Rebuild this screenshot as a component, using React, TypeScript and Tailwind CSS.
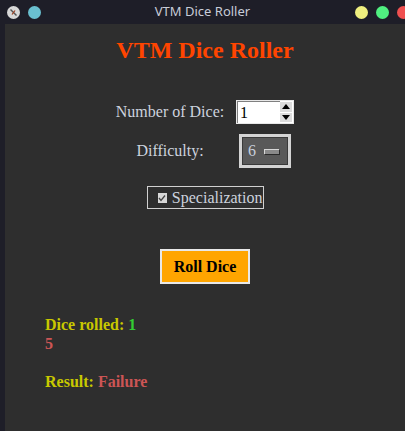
import React from 'react';

const serif = { fontFamily: '"Liberation Serif", "Times New Roman", serif' };

function Dot({ color }: { color: string }) {
  return <span className={`block h-[13px] w-[13px] rounded-full ${color}`} />;
}

export default function App() {
  return (
    <div className="flex h-[431px] w-[405px] flex-col overflow-hidden bg-[#1e1e28]">
      {/* title bar */}
      <div className="relative flex h-[24px] shrink-0 items-center">
        <div className="ml-[7px] flex items-center gap-[8px]">
          <span className="flex h-[13px] w-[13px] items-center justify-center rounded-full bg-[#d8d8d8]">
            <svg width="9" height="9" viewBox="0 0 9 9">
              <path d="M1.5 1.5 L7.5 7.5" stroke="#555" strokeWidth="1.4" />
              <path d="M6 2.5 L3 6.5" stroke="#a04020" strokeWidth="1.2" />
            </svg>
          </span>
          <Dot color="bg-[#6ac0d0]" />
        </div>
        <div
          className="absolute inset-x-0 top-0 flex h-[24px] items-center justify-center text-[13px] text-[#c8ccd8]"
          style={{ fontFamily: '"Noto Sans", "Open Sans", sans-serif' }}
        >
          VTM Dice Roller
        </div>
        <div className="ml-auto mr-[-5px] flex items-center gap-[8px]">
          <Dot color="bg-[#f0f080]" />
          <Dot color="bg-[#50f080]" />
          <Dot color="bg-[#f05050]" />
        </div>
      </div>

      {/* content */}
      <div className="ml-[5px] flex flex-1 flex-col bg-[#2e2e2e]" style={serif}>
        <h1 className="mt-[12px] text-center text-[24px] font-bold leading-[28px] text-[#ff4500]">VTM Dice Roller</h1>

        <div className="mx-auto mt-[36px] grid grid-cols-[108px_58px] items-center justify-items-center gap-x-[12px] gap-y-[10px] text-[16px] text-[#cdd3de]">
          <span className="whitespace-nowrap leading-[20px]">Number of Dice:</span>
          <div className="flex h-[24px] w-[58px] border border-[#e8e8e8] bg-white">
            <div className="flex flex-1 items-center border-l border-t border-[#808080] pl-[2px] text-[16px] leading-none text-black">1</div>
            <div className="flex w-[13px] flex-col gap-[1px] bg-white py-[1px] pr-[1px]">
              <div className="flex flex-1 items-center justify-center bg-[#dcdcdc]">
                <svg width="8" height="5" viewBox="0 0 8 5"><path d="M0 5 L4 0 L8 5 Z" fill="#000" /></svg>
              </div>
              <div className="flex flex-1 items-center justify-center bg-[#dcdcdc]">
                <svg width="8" height="5" viewBox="0 0 8 5"><path d="M0 0 L4 5 L8 0 Z" fill="#000" /></svg>
              </div>
            </div>
          </div>

          <span className="whitespace-nowrap leading-[20px]">Difficulty:</span>
          <div className="h-[34px] w-[52px] border-[3px] border-[#d4d4d4] bg-[#d4d4d4]">
            <div className="flex h-full w-full items-center border border-[#3a3a3a] bg-[#595959] pl-[5px]">
              <span className="leading-none text-[#c8d0dc]">6</span>
              <span className="ml-[8px] block h-[5px] w-[15px] border-l border-t border-[#d8d8d8] bg-[#8a8a8a] shadow-[1px_1px_0_#2a2a2a]" />
            </div>
          </div>
        </div>

        <div className="mt-[18px] flex justify-center">
          <div className="flex h-[23px] w-[117px] items-center border border-[#d0d0d0] pl-[10px] text-[16px] text-[#cdd3de]">
            <span className="flex h-[10px] w-[10px] items-center justify-center bg-[#d8d8d8]">
              <svg width="8" height="8" viewBox="0 0 8 8">
                <path d="M1 4 L3 6.5 L7 1.5" stroke="#444" strokeWidth="1.3" fill="none" />
              </svg>
            </span>
            <span className="ml-[5px] leading-none">Specialization</span>
          </div>
        </div>

        <div className="mt-[40px] flex justify-center">
          <div className="flex h-[35px] w-[90px] items-center justify-center border-2 border-[#e8e8e8] bg-[#ffa500] text-[16px] font-bold text-black">
            Roll Dice
          </div>
        </div>

        <div className="ml-[40px] mt-[31px] text-[16px] font-bold leading-[19px]">
          <div>
            <span className="text-[#c8c800]">Dice rolled: </span>
            <span className="text-[#33cc33]">1</span>
          </div>
          <div className="text-[#cc5555]">5</div>
          <div className="mt-[19px]">
            <span className="text-[#c8c800]">Result: </span>
            <span className="text-[#cc5555]">Failure</span>
          </div>
        </div>
      </div>
    </div>
  );
}
